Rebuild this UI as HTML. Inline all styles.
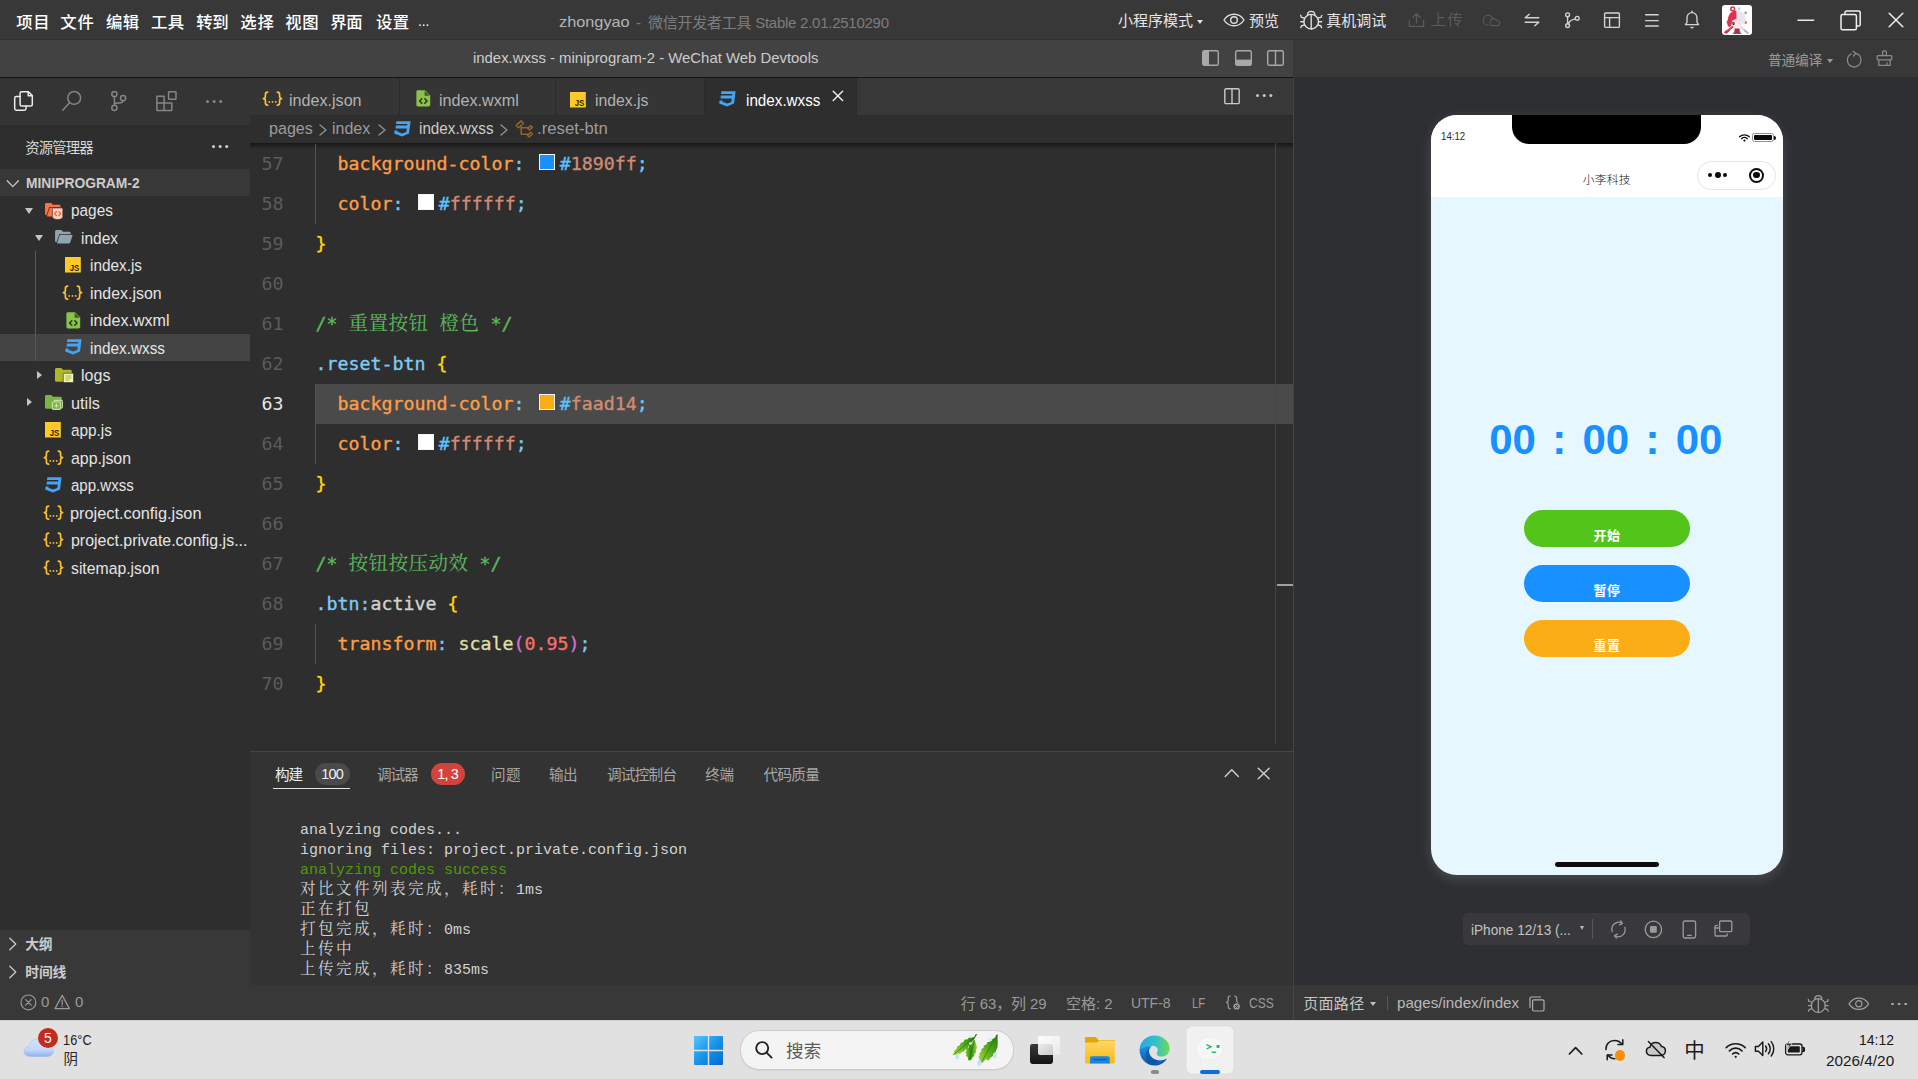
<!DOCTYPE html>
<html lang="zh-CN">
<head>
<meta charset="utf-8">
<title>index.wxss - miniprogram-2 - WeChat Web Devtools</title>
<style>
*{box-sizing:border-box;margin:0;padding:0}
html,body{width:1918px;height:1079px;overflow:hidden;background:#2e2f32}
body{position:relative;font-family:"Liberation Sans","Noto Sans CJK SC",sans-serif;font-size:13px;color:#ccc;-webkit-font-smoothing:antialiased}
.abs{position:absolute}
.t{position:absolute;white-space:nowrap;line-height:20px}
svg{position:absolute;overflow:visible}
/* regions */
#topbar{left:0;top:0;width:1918px;height:40px;background:#383838;border-bottom:1px solid #303030}
#titlerow{left:0;top:40px;width:1293px;height:37px;background:#424242}
#titleborder{left:0;top:77px;width:1293px;height:1px;background:#141414}
#simbar{left:1293px;top:40px;width:625px;height:37px;background:#383838}
#activity{left:0;top:78px;width:250px;height:47px;background:#343434}
#sidebar{left:0;top:125px;width:250px;height:860px;background:#2e2e2e}
#tabs{left:250px;top:78px;width:1043px;height:37px;background:#383838}
#crumbs{left:250px;top:115px;width:1043px;height:28px;background:#2e2e2e}
#editor{left:250px;top:143px;width:1043px;height:608px;background:#2e2e2e}
#panel{left:250px;top:751px;width:1043px;height:234px;background:#333333;border-top:1px solid #454545}
#status{left:0;top:985px;width:1918px;height:35px;background:#383838}
#split{left:1293px;top:78px;width:1px;height:907px;background:#444444}
#sim{left:1294px;top:77px;width:624px;height:908px;background:#2e2f32}
#taskbar{left:0;top:1020px;width:1918px;height:59px;background:#e1e1e1}
</style>
</head>
<body>
<div class="abs" id="topbar"></div>
<div class="abs" id="titlerow"></div>
<div class="abs" id="titleborder"></div>
<div class="abs" id="simbar"></div>
<div class="abs" id="sim"></div>
<div class="abs" id="split"></div>
<div class="abs" id="activity"></div>
<div class="abs" id="sidebar"></div>
<div class="abs" id="tabs"></div>
<div class="abs" id="crumbs"></div>
<div class="abs" id="editor"></div>
<div class="abs" id="panel"></div>
<div class="abs" id="status"></div>
<div class="abs" id="taskbar"></div>
<div class="abs" style="left:1197px;top:20px;border-left:3.2px solid transparent;border-right:3.2px solid transparent;border-top:4.5px solid #e0e0e0"></div>
<div class="abs" style="left:1827.3px;top:59px;border-left:3px solid transparent;border-right:3px solid transparent;border-top:4.6px solid #9a9a9a"></div>
<svg style="left:1223px;top:13px" width="22" height="14" viewBox="0 0 22 14" fill="none" stroke="#e0e0e0" stroke-width="1.4" stroke-linecap="round" stroke-linejoin="round"><path d="M1 7 C4 2.2 8 1.2 11 1.2 C14 1.2 18 2.2 21 7 C18 11.8 14 12.8 11 12.8 C8 12.8 4 11.8 1 7 Z"/><circle cx="11" cy="7" r="3.3"/></svg>
<svg style="left:1298px;top:8px" width="26" height="24" viewBox="0 0 26 24" fill="none" stroke="#e0e0e0" stroke-width="1.35" stroke-linecap="round" stroke-linejoin="round"><g transform="translate(13.2 13.65) scale(1)"><circle cx="0" cy="0" r="7.3"/><path d="M-3.7 -7.000 C-3.300 -11.400 3.300 -11.400 3.700 -7.000"/><path d="M0 -7.000 V7.200"/><path d="M-7.100 -3.700 L-9.800 -4.200 L-10.500 -6.500 M-7.400 .100 H-10.400 M-7.100 3.500 L-9.600 4.100 L-10.400 6.000"/><path d="M7.100 -3.700 L9.800 -4.200 L10.500 -6.300 M7.400 .100 H10.400 M7.100 3.500 L9.600 4.100 L10.400 6.000"/></g></svg>
<svg style="left:1408px;top:12px" width="17" height="16" viewBox="0 0 17 16" fill="none" stroke="#5a5a5a" stroke-width="1.3" stroke-linecap="round" stroke-linejoin="round"><path d="M1.4 8.6 V14.4 H15.6 V8.6"/><path d="M8.5 11 V1.8 M4.9 5.2 L8.5 1.6 L12.1 5.2"/></svg>
<svg style="left:1482px;top:14px" width="19" height="13" viewBox="0 0 19 13" fill="none" stroke="#575757" stroke-width="1.2" stroke-linecap="round" stroke-linejoin="round"><path d="M6.4 11.2 C3.4 11.2 1.2 9.2 1.2 6.4 C1.2 3.6 3.4 1.4 6.2 1.4 C8.6 1.4 10.4 2.8 11 4.8"/><path d="M8.2 8 C8.2 6 9.8 4.6 11.6 4.6 C13 4.6 14.2 5.4 14.7 6.6 C16.4 6.6 17.8 7.6 17.8 9.1 C17.8 10.5 16.6 11.6 15 11.6 H10.4 C9.2 11.6 8.2 10.2 8.2 8 Z"/></svg>
<svg style="left:1524px;top:13px" width="16" height="14" viewBox="0 0 16 14" fill="none" stroke="#d4d4d4" stroke-width="1.4" stroke-linecap="round" stroke-linejoin="round"><path d="M1.2 4.8 H14.8 M1.2 4.8 L5.2 1.2"/><path d="M1.2 9.2 H14.8 M14.8 9.2 L10.8 12.8"/></svg>
<svg style="left:1564px;top:12px" width="17" height="17" viewBox="0 0 17 17" fill="none" stroke="#d4d4d4" stroke-width="1.35" stroke-linecap="round" stroke-linejoin="round"><circle cx="3.6" cy="2.8" r="1.9"/><circle cx="3.6" cy="13.6" r="1.9"/><circle cx="13.2" cy="6.2" r="1.9"/><path d="M3.6 4.8 V11.6 M4.4 12 C5 9 8 7.6 11.4 6.8"/></svg>
<svg style="left:1603px;top:12px" width="18" height="17" viewBox="0 0 18 17" fill="none" stroke="#d4d4d4" stroke-width="1.35" stroke-linecap="round" stroke-linejoin="round"><rect x="1.6" y="1" width="14.8" height="14.4" rx="1"/><path d="M1.6 5.6 H16.4 M6.6 5.6 V15.4"/></svg>
<svg style="left:1644px;top:13px" width="16" height="15" viewBox="0 0 16 15" fill="none" stroke="#d4d4d4" stroke-width="1.4" stroke-linecap="round" stroke-linejoin="round"><path d="M1.6 1.8 H14.2 M1.6 7.6 H14.2 M1.6 13 H14.2"/></svg>
<svg style="left:1684px;top:10px" width="16" height="20" viewBox="0 0 16 20" fill="none" stroke="#d4d4d4" stroke-width="1.35" stroke-linecap="round" stroke-linejoin="round"><path d="M1.4 14.6 H14.6 L13 12.4 V8 C13 4.8 11 2.6 8 2.6 C5 2.6 3 4.8 3 8 V12.4 Z"/><path d="M8 2.4 V1.2"/><path d="M7 17.2 C7.4 18 8.6 18 9 17.2"/></svg>
<svg style="left:1797px;top:19px" width="18" height="3" viewBox="0 0 18 3" fill="none" stroke="#e8e8e8" stroke-width="1.5" stroke-linecap="round" stroke-linejoin="round"><path d="M1 1.2 H16.6"/></svg>
<svg style="left:1840px;top:10px" width="22" height="21" viewBox="0 0 22 21" fill="none" stroke="#f0f0f0" stroke-width="1.5" stroke-linecap="round" stroke-linejoin="round"><rect x="1" y="4.6" width="15.4" height="15.2" rx="1.6"/><path d="M5 4.4 V2.6 C5 1.6 5.6 1 6.6 1 H18.6 C19.6 1 20.2 1.6 20.2 2.6 V14.4 C20.2 15.4 19.6 16 18.6 16 H16.6"/></svg>
<svg style="left:1888px;top:12px" width="16" height="16" viewBox="0 0 16 16" fill="none" stroke="#f0f0f0" stroke-width="1.5" stroke-linecap="round" stroke-linejoin="round"><path d="M1.2 1.2 L14.8 14.8 M14.8 1.2 L1.2 14.8"/></svg>
<svg style="left:1722px;top:4.8px" width="30" height="30.2" viewBox="0 0 30 30"><rect width="30" height="30" rx="3" fill="#ffffff"/>
<path d="M2.4 27.2 L10.6 20.4 L12 22 L4 28.4 Z" fill="#d83a4e"/><path d="M2 27.6 C3 25 6.400 24 8 25.400 L4.600 28.600 Z" fill="#e0324b"/>
<path d="M26.800 27.400 L18.200 20.200 L17 21.800 L25.600 28.600 Z" fill="#dcd6e6"/><path d="M22.600 24.200 L26.900 27.600 L25.400 28.800 L21.600 25.600 Z" fill="#b7b0c4"/>
<path d="M4.200 16.400 L7 15.200 L8 17.800 L5.200 19 Z" fill="#e8731a"/><path d="M25.200 16.600 L22.600 15.400 L21.400 18 L24.200 19.200 Z" fill="#e8731a"/>
<path d="M14.600 5.800 C11 5.200 7.600 7.800 6.400 11.600 C5.400 14.800 5 18 5.600 20.400 C6 21.800 7.600 22.200 8.800 21.200 L10.400 17.400 L14.800 15.600 Z" fill="#de3350"/>
<path d="M14.600 5.800 C19 5 22.800 8 23.400 12.400 C23.800 15.600 23.200 18.400 21.800 19.800 L19.400 17 L14.700 15.600 Z" fill="#e9e4f0"/>
<circle cx="10.700" cy="3.800" r="1.900" fill="none" stroke="#de3350" stroke-width="1.500"/>
<path d="M15.600 2.400 H18.400 V5.400 H15.600 Z" fill="#e4e1ea"/><path d="M16.200 3 H17.800 M16.200 4.400 H17.800" stroke="#9e9aae" stroke-width=".5"/>
<circle cx="23.700" cy="7.800" r="1.700" fill="#cfcbdc"/><circle cx="23.600" cy="7.600" r=".8" fill="#77739a"/>
<path d="M9.800 17.600 C10.200 15.400 12.400 14.400 14.800 14.400 C17.600 14.400 19.800 15.600 20 17.800 C20.200 20.600 18 22.400 14.800 22.400 C11.800 22.400 9.400 20.600 9.800 17.600 Z" fill="#f7e8e2"/>
<path d="M10.400 16.800 C12 15 16 14.600 19.600 16.400 L19.400 15 C17 13.600 12.400 13.800 10.400 15.400 Z" fill="#efd9d2"/>
<rect x="10.300" y="16.900" width="2.300" height="3" rx=".9" fill="#3d2a66"/><rect x="10.900" y="17.500" width="1" height="1.300" fill="#8a4fd0"/>
<path d="M16.200 18.600 C16.800 18 17.800 18 18.400 18.600" stroke="#caa" stroke-width=".5" fill="none"/>
<path d="M11.400 22.600 H18.600 L19.400 28.400 H10.800 Z" fill="#f1edf2"/><path d="M12.800 23.400 H17.400 L18 27.800 H12.200 Z" fill="#b92a3f"/><path d="M11 27.600 H19.200 V28.800 H11 Z" fill="#6b4a4a"/>
</svg>
<svg style="left:1202px;top:50px" width="17" height="16" viewBox="0 0 17 16" fill="none" stroke="#a8a8a8" stroke-width="1.4" stroke-linecap="round" stroke-linejoin="round"><rect x=".7" y=".7" width="15.6" height="14.6" rx="1.6"/><path d="M1 1 H7 V15 H1 Z" fill="#a8a8a8" stroke="none"/></svg>
<svg style="left:1234.5px;top:50px" width="17" height="16" viewBox="0 0 17 16" fill="none" stroke="#a8a8a8" stroke-width="1.4" stroke-linecap="round" stroke-linejoin="round"><rect x=".7" y=".7" width="15.6" height="14.6" rx="1.6"/><path d="M1 9.6 H16 V15 H1 Z" fill="#a8a8a8" stroke="none"/></svg>
<svg style="left:1267px;top:50px" width="17" height="16" viewBox="0 0 17 16" fill="none" stroke="#a8a8a8" stroke-width="1.4" stroke-linecap="round" stroke-linejoin="round"><rect x=".7" y=".7" width="15.6" height="14.6" rx="1.6"/><path d="M8.5 .7 V15.3"/></svg>
<svg style="left:1845px;top:50px" width="18" height="19" viewBox="0 0 18 19" fill="none" stroke="#8a8a8a" stroke-width="1.25" stroke-linecap="round" stroke-linejoin="round"><path d="M10.4 3.4 C13.8 4 16 6.8 16 10.2 C16 14 13 17 9.2 17 C5.4 17 2.4 14 2.4 10.2 C2.4 7.4 4 5 6.4 4"/><path d="M8.2 1.2 L10.8 3.4 L8.6 6"/></svg>
<svg style="left:1875.5px;top:50px" width="17" height="17" viewBox="0 0 17 17" fill="none" stroke="#8a8a8a" stroke-width="1.25" stroke-linecap="round" stroke-linejoin="round"><path d="M6.6 5.6 V2 C6.6 1.3 7.1 .9 7.8 .9 H9.2 C9.9 .9 10.4 1.3 10.4 2 V5.6"/><rect x="1.2" y="5.6" width="14.6" height="4.2" rx=".8"/><path d="M2.8 9.8 V15.4 H14.2 V9.8 M11 15.4 V12.8"/></svg>
<svg style="left:13px;top:90px" width="22" height="22" viewBox="0 0 22 22" fill="none" stroke="#ececec" stroke-width="1.5" stroke-linecap="round" stroke-linejoin="round" ><path d="M7 6.6 H3.2 C2.2 6.6 1.7 7.2 1.7 8.2 V18.6 C1.7 19.6 2.2 20.2 3.2 20.2 H11.4 C12.4 20.2 13 19.6 13 18.6 V16"/><path d="M8.6 1.7 H15.4 L19.3 5.6 V14.4 C19.3 15.4 18.8 16 17.8 16 H8.6 C7.6 16 7.1 15.4 7.1 14.4 V3.2 C7.1 2.2 7.6 1.7 8.6 1.7 Z"/><path d="M15.2 2 V5.8 H19"/></svg>
<svg style="left:61px;top:90px" width="22" height="22" viewBox="0 0 22 22" fill="none" stroke="#858585" stroke-width="1.5" stroke-linecap="round" stroke-linejoin="round" ><circle cx="13.2" cy="7.9" r="6.4"/><path d="M8.7 12.6 L1.8 20.2"/></svg>
<svg style="left:109px;top:90px" width="20" height="22" viewBox="0 0 20 22" fill="none" stroke="#858585" stroke-width="1.5" stroke-linecap="round" stroke-linejoin="round" ><circle cx="5.4" cy="4" r="2.6"/><circle cx="5.4" cy="17.8" r="2.6"/><circle cx="14.1" cy="8.1" r="2.6"/><path d="M5.4 6.6 V15.2"/><path d="M14.1 10.7 C14.1 13 11 13 5.6 13.2"/></svg>
<svg style="left:155px;top:90px" width="23" height="22" viewBox="0 0 23 22" fill="none" stroke="#858585" stroke-width="1.5" stroke-linecap="round" stroke-linejoin="round" ><path d="M1.9 6.3 H9.1 V13.1 H16.8 V20.4 H1.9 Z"/><path d="M1.9 13.1 H9.1 V20.4"/><rect x="13.6" y="1.8" width="7.4" height="7.4" rx=".6"/></svg>
<div class="abs" style="left:205.5px;top:100px;width:3px;height:3px;border-radius:50%;background:#858585;box-shadow:6.6px 0 0 #858585,13.2px 0 0 #858585"></div>
<div class="abs" style="left:212px;top:145.2px;width:3px;height:3px;border-radius:50%;background:#d0d0d0;box-shadow:6.6px 0 0 #d0d0d0,13.2px 0 0 #d0d0d0"></div>
<div class="abs" style="left:0;top:169px;width:250px;height:27px;background:#383838"></div>
<svg style="left:6px;top:178.8px" width="14" height="10" viewBox="0 0 14 10" fill="none" stroke="#c8c8c8" stroke-width="1.3" stroke-linecap="round" stroke-linejoin="round" ><path d="M1.2 1.8 L6.8 7.6 L12.4 1.8"/></svg>
<div class="abs" style="left:0;top:334px;width:250px;height:27px;background:#444444"></div>
<div class="abs" style="left:35px;top:251px;width:1px;height:110px;background:#585858"></div>
<div class="abs" style="left:24.8px;top:207.9px;border-left:4.2px solid transparent;border-right:4.2px solid transparent;border-top:6.4px solid #c4c4c4"></div>
<svg style="left:44.8px;top:203.1px" width="17.4" height="13.6" viewBox="0 0 18 14" fill="#ff7043"><path d="M1.6 0 H6.4 L8.2 1.8 H14.6 C15.5 1.8 16 2.3 16 3.2 V4.2 H4.4 L1.6 12.4 H.8 C.3 12.4 0 12 0 11.4 V1.6 C0 .6 .6 0 1.6 0 Z"/><path d="M4.9 4.9 H17.4 C17.9 4.9 18.1 5.3 17.9 5.8 L15.6 13 C15.4 13.6 15 13.9 14.4 13.9 H2.6 C2.1 13.9 1.9 13.6 2.1 13.1 Z"/></svg>
<svg style="left:52.2px;top:207.9px" width="11" height="12" viewBox="0 0 11 12"><path d="M1.4 0 H9.6 C10.4 0 10.8 .4 10.8 1.2 V8.6 C10.8 10.4 8.6 11.6 5.6 11.6 C2.6 11.6 .4 10.4 .4 8.6 V1.2 C.4 .4 .6 0 1.4 0 Z" fill="#ffccbc" stroke="#2e2e2e" stroke-width=".6"/><path d="M4.4 3.6 L2.6 5.6 L4.4 7.6 M6.8 3.6 L8.6 5.6 L6.8 7.6" fill="none" stroke="#f4511e" stroke-width="1.1" stroke-linecap="round" stroke-linejoin="round"/></svg>
<div class="abs" style="left:34.8px;top:235.4px;border-left:4.2px solid transparent;border-right:4.2px solid transparent;border-top:6.4px solid #c4c4c4"></div>
<svg style="left:54.8px;top:230.2px" width="17.6" height="13.6" viewBox="0 0 18 14" fill="#90a4ae"><path d="M1.6 0 H6.4 L8.2 1.8 H14.6 C15.5 1.8 16 2.3 16 3.2 V4.2 H4.4 L1.6 12.4 H.8 C.3 12.4 0 12 0 11.4 V1.6 C0 .6 .6 0 1.6 0 Z"/><path d="M4.9 4.9 H17.4 C17.9 4.9 18.1 5.3 17.9 5.8 L15.6 13 C15.4 13.6 15 13.9 14.4 13.9 H2.6 C2.1 13.9 1.9 13.6 2.1 13.1 Z"/></svg>
<svg style="left:65.2px;top:257.3px" width="16" height="16" viewBox="0 0 16 16"><rect width="15.8" height="15.5" fill="#ffca28"/><text x="4.7" y="13.6" font-family="Liberation Sans,sans-serif" font-weight="bold" font-size="8.6" fill="#2b2400" textLength="9.6" lengthAdjust="spacingAndGlyphs">JS</text></svg>
<svg style="left:62.4px;top:284.6px" width="21" height="16" viewBox="0 0 21 16" fill="none" stroke="#fbc02d" stroke-width="1.7" stroke-linecap="round" stroke-linejoin="round" ><path d="M5.6 1.2 C3.6 1.2 3.4 2.2 3.4 3.6 V5.6 C3.4 6.8 2.8 7.4 1.4 7.6 C2.8 7.8 3.4 8.4 3.4 9.6 V11.8 C3.4 13.2 3.6 14.2 5.6 14.2"/><path d="M15.4 1.2 C17.4 1.2 17.6 2.2 17.6 3.6 V5.6 C17.6 6.8 18.2 7.4 19.6 7.6 C18.2 7.8 17.6 8.4 17.6 9.6 V11.8 C17.6 13.2 17.4 14.2 15.4 14.2"/><path d="M7.2 10.9 h.1 M10.45 10.9 h.1 M13.7 10.9 h.1" stroke-width="1.7"/></svg>
<svg style="left:65.8px;top:311.9px" width="15" height="17" viewBox="0 0 15 17"><path d="M2 .2 H9 L14.2 5.4 V14.8 C14.2 15.8 13.6 16.4 12.6 16.4 H2 C1 16.4 .4 15.8 .4 14.8 V1.8 C.4 .8 1 .2 2 .2 Z" fill="#8bc34a"/><path d="M8.6 .8 V5.8 H13.6 Z" fill="#2e2e2e" opacity=".75"/><path d="M5.8 8.8 L3.6 11 L5.8 13.2 M8.8 8.8 L11 11 L8.8 13.2" fill="none" stroke="#24361a" stroke-width="1.5" stroke-linecap="round" stroke-linejoin="round"/></svg>
<svg style="left:64.6px;top:339.2px" width="17" height="16" viewBox="0 0 17 16" fill="#42a5f5"><path d="M2.4 .2 H16.6 L15 12.6 L8 15.6 L.2 12.6 L.6 9.6 H3.6 L3.5 10.8 L8.1 12.5 L12.3 10.9 L12.8 7.4 H1.5 L1.9 4.6 H13.1 L13.3 3 H2 Z"/></svg>
<div class="abs" style="left:37.2px;top:370.7px;border-top:4.4px solid transparent;border-bottom:4.4px solid transparent;border-left:5.8px solid #c4c4c4"></div>
<svg style="left:54.8px;top:367.9px" width="17" height="14" viewBox="0 0 17 14" fill="#afb42b"><path d="M1.6 0 H6.2 L8 1.8 H15.2 C16.2 1.8 16.8 2.4 16.8 3.4 V12.2 C16.8 13.2 16.2 13.8 15.2 13.8 H1.6 C.6 13.8 0 13.2 0 12.2 V1.6 C0 .6 .6 0 1.6 0 Z"/></svg>
<svg style="left:62.6px;top:373.1px" width="11" height="10" viewBox="0 0 11 10"><rect x=".3" y=".3" width="10.2" height="9.2" rx="1" fill="#f0f4c3" stroke="#2e2e2e" stroke-width=".6"/><path d="M2.4 3 H8.4 M2.4 5 H8.4 M2.4 7 H6.4" stroke="#afb42b" stroke-width="1" fill="none"/></svg>
<div class="abs" style="left:27.2px;top:398.2px;border-top:4.4px solid transparent;border-bottom:4.4px solid transparent;border-left:5.8px solid #c4c4c4"></div>
<svg style="left:44.8px;top:395.0px" width="17" height="14" viewBox="0 0 17 14" fill="#7cb342"><path d="M1.6 0 H6.2 L8 1.8 H15.2 C16.2 1.8 16.8 2.4 16.8 3.4 V12.2 C16.8 13.2 16.2 13.8 15.2 13.8 H1.6 C.6 13.8 0 13.2 0 12.2 V1.6 C0 .6 .6 0 1.6 0 Z"/></svg>
<svg style="left:52.4px;top:399.6px" width="11" height="10" viewBox="0 0 11 10"><rect x="2.2" y=".4" width="8.2" height="7.6" rx="1" fill="none" stroke="#c5e1a5" stroke-width="1.1"/><rect x=".4" y="2" width="8" height="7.4" rx="1" fill="#7cb342" stroke="#c5e1a5" stroke-width="1.1"/><path d="M4.4 3.8 V7.6 M2.5 5.7 H6.3" stroke="#dcedc8" stroke-width="1.1"/></svg>
<svg style="left:45.3px;top:422.3px" width="16" height="16" viewBox="0 0 16 16"><rect width="15.8" height="15.5" fill="#ffca28"/><text x="4.7" y="13.6" font-family="Liberation Sans,sans-serif" font-weight="bold" font-size="8.6" fill="#2b2400" textLength="9.6" lengthAdjust="spacingAndGlyphs">JS</text></svg>
<svg style="left:42.6px;top:449.6px" width="21" height="16" viewBox="0 0 21 16" fill="none" stroke="#fbc02d" stroke-width="1.7" stroke-linecap="round" stroke-linejoin="round" ><path d="M5.6 1.2 C3.6 1.2 3.4 2.2 3.4 3.6 V5.6 C3.4 6.8 2.8 7.4 1.4 7.6 C2.8 7.8 3.4 8.4 3.4 9.6 V11.8 C3.4 13.2 3.6 14.2 5.6 14.2"/><path d="M15.4 1.2 C17.4 1.2 17.6 2.2 17.6 3.6 V5.6 C17.6 6.8 18.2 7.4 19.6 7.6 C18.2 7.8 17.6 8.4 17.6 9.6 V11.8 C17.6 13.2 17.4 14.2 15.4 14.2"/><path d="M7.2 10.9 h.1 M10.45 10.9 h.1 M13.7 10.9 h.1" stroke-width="1.7"/></svg>
<svg style="left:44.6px;top:476.7px" width="17" height="16" viewBox="0 0 17 16" fill="#42a5f5"><path d="M2.4 .2 H16.6 L15 12.6 L8 15.6 L.2 12.6 L.6 9.6 H3.6 L3.5 10.8 L8.1 12.5 L12.3 10.9 L12.8 7.4 H1.5 L1.9 4.6 H13.1 L13.3 3 H2 Z"/></svg>
<svg style="left:42.6px;top:504.6px" width="21" height="16" viewBox="0 0 21 16" fill="none" stroke="#fbc02d" stroke-width="1.7" stroke-linecap="round" stroke-linejoin="round" ><path d="M5.6 1.2 C3.6 1.2 3.4 2.2 3.4 3.6 V5.6 C3.4 6.8 2.8 7.4 1.4 7.6 C2.8 7.8 3.4 8.4 3.4 9.6 V11.8 C3.4 13.2 3.6 14.2 5.6 14.2"/><path d="M15.4 1.2 C17.4 1.2 17.6 2.2 17.6 3.6 V5.6 C17.6 6.8 18.2 7.4 19.6 7.6 C18.2 7.8 17.6 8.4 17.6 9.6 V11.8 C17.6 13.2 17.4 14.2 15.4 14.2"/><path d="M7.2 10.9 h.1 M10.45 10.9 h.1 M13.7 10.9 h.1" stroke-width="1.7"/></svg>
<svg style="left:42.6px;top:532.1px" width="21" height="16" viewBox="0 0 21 16" fill="none" stroke="#fbc02d" stroke-width="1.7" stroke-linecap="round" stroke-linejoin="round" ><path d="M5.6 1.2 C3.6 1.2 3.4 2.2 3.4 3.6 V5.6 C3.4 6.8 2.8 7.4 1.4 7.6 C2.8 7.8 3.4 8.4 3.4 9.6 V11.8 C3.4 13.2 3.6 14.2 5.6 14.2"/><path d="M15.4 1.2 C17.4 1.2 17.6 2.2 17.6 3.6 V5.6 C17.6 6.8 18.2 7.4 19.6 7.6 C18.2 7.8 17.6 8.4 17.6 9.6 V11.8 C17.6 13.2 17.4 14.2 15.4 14.2"/><path d="M7.2 10.9 h.1 M10.45 10.9 h.1 M13.7 10.9 h.1" stroke-width="1.7"/></svg>
<svg style="left:42.6px;top:559.6px" width="21" height="16" viewBox="0 0 21 16" fill="none" stroke="#fbc02d" stroke-width="1.7" stroke-linecap="round" stroke-linejoin="round" ><path d="M5.6 1.2 C3.6 1.2 3.4 2.2 3.4 3.6 V5.6 C3.4 6.8 2.8 7.4 1.4 7.6 C2.8 7.8 3.4 8.4 3.4 9.6 V11.8 C3.4 13.2 3.6 14.2 5.6 14.2"/><path d="M15.4 1.2 C17.4 1.2 17.6 2.2 17.6 3.6 V5.6 C17.6 6.8 18.2 7.4 19.6 7.6 C18.2 7.8 17.6 8.4 17.6 9.6 V11.8 C17.6 13.2 17.4 14.2 15.4 14.2"/><path d="M7.2 10.9 h.1 M10.45 10.9 h.1 M13.7 10.9 h.1" stroke-width="1.7"/></svg>
<div class="abs" style="left:0;top:930px;width:250px;height:55px;background:#383838"></div>
<svg style="left:8px;top:937px" width="10" height="14" viewBox="0 0 10 14" fill="none" stroke="#c8c8c8" stroke-width="1.3" stroke-linecap="round" stroke-linejoin="round" ><path d="M1.8 1.2 L7.8 7 L1.8 12.8"/></svg>
<svg style="left:8px;top:964.5px" width="10" height="14" viewBox="0 0 10 14" fill="none" stroke="#c8c8c8" stroke-width="1.3" stroke-linecap="round" stroke-linejoin="round" ><path d="M1.8 1.2 L7.8 7 L1.8 12.8"/></svg>
<div class="abs" style="left:250px;top:78px;width:149px;height:37px;background:#353535"></div>
<div class="abs" style="left:400px;top:78px;width:155px;height:37px;background:#353535"></div>
<div class="abs" style="left:556px;top:78px;width:148px;height:37px;background:#353535"></div>
<div class="abs" style="left:705px;top:78px;width:151px;height:37px;background:#2e2e2e"></div>
<div class="abs" style="left:399px;top:78px;width:1px;height:37px;background:#2b2b2b"></div>
<div class="abs" style="left:555px;top:78px;width:1px;height:37px;background:#2b2b2b"></div>
<div class="abs" style="left:704px;top:78px;width:1px;height:37px;background:#2b2b2b"></div>
<div class="abs" style="left:856px;top:78px;width:1px;height:37px;background:#2b2b2b"></div>
<svg style="left:262.4px;top:91.4px" width="21" height="16" viewBox="0 0 21 16" fill="none" stroke="#fbc02d" stroke-width="1.7" stroke-linecap="round" stroke-linejoin="round" ><path d="M5.6 1.2 C3.6 1.2 3.4 2.2 3.4 3.6 V5.6 C3.4 6.8 2.8 7.4 1.4 7.6 C2.8 7.8 3.4 8.4 3.4 9.6 V11.8 C3.4 13.2 3.6 14.2 5.6 14.2"/><path d="M15.4 1.2 C17.4 1.2 17.6 2.2 17.6 3.6 V5.6 C17.6 6.8 18.2 7.4 19.6 7.6 C18.2 7.8 17.6 8.4 17.6 9.6 V11.8 C17.6 13.2 17.4 14.2 15.4 14.2"/><path d="M7.2 10.9 h.1 M10.45 10.9 h.1 M13.7 10.9 h.1" stroke-width="1.7"/></svg>
<svg style="left:415.6px;top:90.4px" width="15" height="17" viewBox="0 0 15 17"><path d="M2 .2 H9 L14.2 5.4 V14.8 C14.2 15.8 13.6 16.4 12.6 16.4 H2 C1 16.4 .4 15.8 .4 14.8 V1.8 C.4 .8 1 .2 2 .2 Z" fill="#8bc34a"/><path d="M8.6 .8 V5.8 H13.6 Z" fill="#2e2e2e" opacity=".75"/><path d="M5.8 8.8 L3.6 11 L5.8 13.2 M8.8 8.8 L11 11 L8.8 13.2" fill="none" stroke="#24361a" stroke-width="1.5" stroke-linecap="round" stroke-linejoin="round"/></svg>
<svg style="left:570px;top:91.6px" width="16" height="16" viewBox="0 0 16 16"><rect width="15.8" height="15.5" fill="#ffca28"/><text x="4.7" y="13.6" font-family="Liberation Sans,sans-serif" font-weight="bold" font-size="8.6" fill="#2b2400" textLength="9.6" lengthAdjust="spacingAndGlyphs">JS</text></svg>
<svg style="left:719.4px;top:91.2px" width="17" height="16" viewBox="0 0 17 16" fill="#42a5f5"><path d="M2.4 .2 H16.6 L15 12.6 L8 15.6 L.2 12.6 L.6 9.6 H3.6 L3.5 10.8 L8.1 12.5 L12.3 10.9 L12.8 7.4 H1.5 L1.9 4.6 H13.1 L13.3 3 H2 Z"/></svg>
<svg style="left:832px;top:90.4px" width="12" height="12" viewBox="0 0 12 12" fill="none" stroke="#f0f0f0" stroke-width="1.4" stroke-linecap="round" stroke-linejoin="round" ><path d="M1.2 1.2 L10.6 10.6 M10.6 1.2 L1.2 10.6"/></svg>
<svg style="left:1223.5px;top:88px" width="16" height="17" viewBox="0 0 16 17" fill="none" stroke="#c8c8c8" stroke-width="1.4" stroke-linecap="round" stroke-linejoin="round" ><rect x=".8" y=".8" width="14.4" height="14.8" rx="1.2"/><path d="M8 .8 V15.6"/></svg>
<div class="abs" style="left:1255.6px;top:94.3px;width:3px;height:3px;border-radius:50%;background:#c8c8c8;box-shadow:6.7px 0 0 #c8c8c8,13.4px 0 0 #c8c8c8"></div>
<svg style="left:319.3px;top:123.6px" width="9" height="12" viewBox="0 0 9 12" fill="none" stroke="#929292" stroke-width="1.35" stroke-linecap="round" stroke-linejoin="round" ><path d="M1 1 L7 6 L1 11"/></svg>
<svg style="left:378.3px;top:123.6px" width="9" height="12" viewBox="0 0 9 12" fill="none" stroke="#929292" stroke-width="1.35" stroke-linecap="round" stroke-linejoin="round" ><path d="M1 1 L7 6 L1 11"/></svg>
<svg style="left:500.3px;top:123.6px" width="9" height="12" viewBox="0 0 9 12" fill="none" stroke="#929292" stroke-width="1.35" stroke-linecap="round" stroke-linejoin="round" ><path d="M1 1 L7 6 L1 11"/></svg>
<svg style="left:393.6px;top:121px" width="17" height="16" viewBox="0 0 17 16" fill="#42a5f5"><path d="M2.4 .2 H16.6 L15 12.6 L8 15.6 L.2 12.6 L.6 9.6 H3.6 L3.5 10.8 L8.1 12.5 L12.3 10.9 L12.8 7.4 H1.5 L1.9 4.6 H13.1 L13.3 3 H2 Z"/></svg>
<svg style="left:505px;top:114.6px" width="40" height="28" viewBox="0 0 40 28" fill="none" stroke="#916528" stroke-width="1.5" stroke-linejoin="round" stroke-linecap="round"><path d="M16.1 5.900 L18.500 8.300 L13.500 12.700 L11.300 10.400 Z"/><path d="M16.2 11.600 V19.200 H22.600 M16.2 12.700 H23"/><path d="M25.700 10.800 L27.400 12.400 L24.400 15 L22.800 13.400 Z"/><path d="M25.700 17.400 L27.400 19 L24.200 22 L22.600 20.400 Z"/></svg>
<div class="abs" style="left:250px;top:143px;width:1043px;height:6px;background:linear-gradient(#171717,rgba(28,28,28,0))"></div>
<div class="abs" style="left:315px;top:384px;width:978px;height:40px;background:#4a4a4a"></div>
<div class="abs" style="left:315px;top:144px;width:1px;height:80px;background:#545454"></div>
<div class="abs" style="left:315px;top:384px;width:1px;height:80px;background:#545454"></div>
<div class="abs" style="left:315px;top:624px;width:1px;height:40px;background:#545454"></div>
<div class="abs" style="left:1275px;top:143px;width:1px;height:601px;background:#444444"></div>
<div class="abs" style="left:1277px;top:584px;width:16px;height:2px;background:#a0a0a0"></div>
<div class="abs" style="left:315px;top:763px;width:35px;height:22px;border-radius:11px;background:#4a4a4a"></div>
<div class="abs" style="left:273px;top:787.5px;width:77px;height:1.2px;background:#e4e4e4"></div>
<div class="abs" style="left:431px;top:763px;width:34px;height:22px;border-radius:11px;background:#d2433d"></div>
<svg style="left:1224px;top:767.6px" width="16" height="10" viewBox="0 0 16 10" fill="none" stroke="#d0d0d0" stroke-width="1.4" stroke-linecap="round" stroke-linejoin="round"><path d="M1.2 8.6 L7.8 1.8 L14.4 8.6"/></svg>
<svg style="left:1257.4px;top:767px" width="14" height="13" viewBox="0 0 14 13" fill="none" stroke="#d0d0d0" stroke-width="1.4" stroke-linecap="round" stroke-linejoin="round"><path d="M1.2 1.2 L12.2 11.8 M12.2 1.2 L1.2 11.8"/></svg>
<svg style="left:19.6px;top:993.8px" width="17" height="17" viewBox="0 0 17 17" fill="none" stroke="#9a9a9a" stroke-width="1.2" stroke-linecap="round" stroke-linejoin="round"><circle cx="8.4" cy="8.4" r="7.4"/><path d="M5.6 5.6 L11.2 11.2 M11.2 5.6 L5.6 11.2"/></svg>
<svg style="left:53.6px;top:993.6px" width="17" height="16" viewBox="0 0 17 16" fill="none" stroke="#9a9a9a" stroke-width="1.2" stroke-linecap="round" stroke-linejoin="round"><path d="M8.2 1.4 L15.4 14.6 H1 Z"/><path d="M8.2 6 V10.4 M8.2 12.2 V12.6"/></svg>
<svg style="left:1225px;top:995.4px" width="17" height="16" viewBox="0 0 17 16" fill="none" stroke="#9a9a9a" stroke-width="1.2" stroke-linecap="round" stroke-linejoin="round"><path d="M5.2 1 C3.4 1 3.2 1.8 3.2 3.2 V5.6 C3.2 6.6 2.6 7.2 1.4 7.4 C2.6 7.6 3.2 8.2 3.2 9.2 V11.6 C3.2 13 3.4 13.8 5.2 13.8"/><path d="M9.6 1 C11.4 1 11.6 1.8 11.6 3.2 V5.6 C11.6 6.4 12 7 12.8 7.3"/><circle cx="11.6" cy="11.4" r="3.2" fill="#9a9a9a" stroke="none"/><path d="M10.4 10.2 L12.8 12.6 M12.8 10.2 L10.4 12.6" stroke="#383838" stroke-width="1"/></svg>
<div class="abs" style="left:1293px;top:985px;width:1px;height:35px;background:#464646"></div>
<div class="abs" style="left:1370.4px;top:1002px;border-left:3.4px solid transparent;border-right:3.4px solid transparent;border-top:4.4px solid #c0c0c0"></div>
<div class="abs" style="left:1387px;top:995.5px;width:1px;height:14px;background:#5a5a5a"></div>
<svg style="left:1529px;top:996px" width="17" height="16" viewBox="0 0 17 16" fill="none" stroke="#b0b0b0" stroke-width="1.2" stroke-linecap="round" stroke-linejoin="round"><rect x="3.6" y="3.8" width="11.4" height="11.2" rx="1.2"/><path d="M1 11.6 V2.2 C1 1.4 1.4 1 2.2 1 H11.6"/></svg>
<svg style="left:1806px;top:993px" width="26" height="24" viewBox="0 0 26 24" fill="none" stroke="#a0a0a0" stroke-width="1.3" stroke-linecap="round" stroke-linejoin="round"><g transform="translate(12.3 12.5) scale(.95)"><circle cx="0" cy="0" r="7.3"/><path d="M-3.7 -7.000 C-3.300 -11.400 3.300 -11.400 3.700 -7.000"/><path d="M0 -7.000 V7.200"/><path d="M-7.100 -3.700 L-9.800 -4.200 L-10.500 -6.500 M-7.400 .100 H-10.400 M-7.100 3.500 L-9.600 4.100 L-10.400 6.000"/><path d="M7.100 -3.700 L9.800 -4.200 L10.500 -6.300 M7.400 .100 H10.400 M7.100 3.500 L9.600 4.100 L10.400 6.000"/></g></svg>
<svg style="left:1848px;top:997.4px" width="22" height="14" viewBox="0 0 22 14" fill="none" stroke="#a0a0a0" stroke-width="1.2" stroke-linecap="round" stroke-linejoin="round"><path d="M1 6.8 C4 2.2 7.6 1.2 10.8 1.2 C14 1.2 17.6 2.2 20.6 6.8 C17.6 11.4 14 12.4 10.8 12.4 C7.6 12.4 4 11.4 1 6.8 Z"/><circle cx="10.8" cy="6.8" r="3.1"/></svg>
<div class="abs" style="left:1891.4px;top:1002.8px;width:2.6px;height:2.6px;border-radius:50%;background:#a8a8a8;box-shadow:6.6px 0 0 #a8a8a8,13.2px 0 0 #a8a8a8"></div>
<div class="abs" style="left:1431px;top:115px;width:352px;height:760px;border-radius:26px;background:#e6f7ff;overflow:hidden;box-shadow:0 4px 12px 0 rgba(255,255,255,.14)"><div class="abs" style="left:0;top:0;width:352px;height:82px;background:#ffffff"></div><div class="abs" style="left:81px;top:-20px;width:189px;height:49px;border-radius:17px;background:#000"></div></div>
<svg style="left:1739px;top:133.6px" width="11" height="8" viewBox="0 0 11 8"><path d="M.5 2.7 C3.2 .2 7.6 .2 10.3 2.7" fill="none" stroke="#111" stroke-width="1.3" stroke-linecap="round"/><path d="M2.5 4.7 C4.2 3.2 6.6 3.2 8.3 4.7" fill="none" stroke="#111" stroke-width="1.3" stroke-linecap="round"/><circle cx="5.4" cy="6.6" r="1.1" fill="#111"/></svg>
<div class="abs" style="left:1752.2px;top:133.2px;width:21.4px;height:9.2px;border:1px solid #8e8e8e;border-radius:2.4px"></div>
<div class="abs" style="left:1754.2px;top:135.2px;width:17.4px;height:5.2px;border-radius:1px;background:#0a0a0a"></div>
<div class="abs" style="left:1774px;top:136.2px;width:2px;height:3.4px;border-radius:0 2px 2px 0;background:#0a0a0a"></div>
<div class="abs" style="left:1697.4px;top:161.1px;width:78.6px;height:28.6px;border:1px solid #e3e3e3;border-radius:14.4px;background:#fff"></div>
<div class="abs" style="left:1708px;top:173.3px;width:3.8px;height:3.8px;border-radius:50%;background:#0a0a0a"></div>
<div class="abs" style="left:1714.5px;top:172px;width:6.4px;height:6.4px;border-radius:50%;background:#0a0a0a"></div>
<div class="abs" style="left:1723.1px;top:173.3px;width:3.8px;height:3.8px;border-radius:50%;background:#0a0a0a"></div>
<div class="abs" style="left:1748.9px;top:167.6px;width:15px;height:15px;border-radius:50%;border:2.3px solid #0a0a0a"></div>
<div class="abs" style="left:1753.2px;top:171.9px;width:6.4px;height:6.4px;border-radius:50%;background:#0a0a0a"></div>
<div class="abs" style="left:1524px;top:510px;width:166px;height:37px;border-radius:18.5px;background:#52c41a"></div>
<div class="abs" style="left:1524px;top:565px;width:166px;height:37px;border-radius:18.5px;background:#1890ff"></div>
<div class="abs" style="left:1524px;top:620px;width:166px;height:37px;border-radius:18.5px;background:#faad14"></div>
<div class="abs" style="left:1555px;top:862.4px;width:104.4px;height:4.8px;border-radius:2.4px;background:#0c0c0c"></div>
<div class="abs" style="left:1463px;top:913px;width:287px;height:32px;border-radius:5px;background:#39393b"></div>
<div class="abs" style="left:1579.6px;top:926px;border-left:2.6px solid transparent;border-right:2.6px solid transparent;border-top:4.4px solid #b8b8b8"></div>
<div class="abs" style="left:1592px;top:919.4px;width:1px;height:19.6px;background:#585858"></div>
<svg style="left:1609px;top:920px" width="19" height="19" viewBox="0 0 19 19" fill="none" stroke="#9a9a9a" stroke-width="1.3" stroke-linecap="round" stroke-linejoin="round"><path d="M3.2 11.6 C2 8 3.6 4 7.4 2.6 C9.4 1.9 11.4 2.2 13 3.2"/><path d="M11.6 .9 L13.4 3.4 L10.6 4.8"/><path d="M15.8 7.4 C17 11 15.4 15 11.6 16.4 C9.6 17.1 7.6 16.8 6 15.8"/><path d="M7.4 18.1 L5.6 15.6 L8.4 14.2"/></svg>
<svg style="left:1643.8px;top:920px" width="19" height="19" viewBox="0 0 19 19" fill="none" stroke="#9a9a9a" stroke-width="1.3" stroke-linecap="round" stroke-linejoin="round"><circle cx="9.4" cy="9.4" r="8.2"/><rect x="6" y="6" width="6.8" height="6.8" rx="1" fill="#9a9a9a" stroke="none"/></svg>
<svg style="left:1681.6px;top:919.6px" width="15" height="19" viewBox="0 0 15 19" fill="none" stroke="#9a9a9a" stroke-width="1.3" stroke-linecap="round" stroke-linejoin="round"><rect x="1.2" y="1" width="12.4" height="17" rx="1.8"/><path d="M5.6 15.4 H9.2"/></svg>
<svg style="left:1714.4px;top:920.4px" width="19" height="18" viewBox="0 0 19 18" fill="none" stroke="#9a9a9a" stroke-width="1.3" stroke-linecap="round" stroke-linejoin="round"><rect x="5.6" y="1" width="12.2" height="10.6" rx="1.2"/><path d="M3.4 5.4 H2.2 C1.4 5.4 1 5.8 1 6.6 V14.8 C1 15.6 1.4 16 2.2 16 H12 C12.8 16 13.2 15.6 13.2 14.8 V13.8"/><path d="M1 8 H5.4"/></svg>
<div class="abs" style="left:0;top:1020px;width:1918px;height:1px;background:#cfcfcf"></div>
<svg style="left:23px;top:1034.6px" width="33" height="24" viewBox="0 0 33 24"><defs><linearGradient id="cl" x1="0" y1="0" x2="0" y2="1"><stop offset="0" stop-color="#cfe2fc"/><stop offset=".6" stop-color="#c3d9fa"/><stop offset="1" stop-color="#8fb2f0"/></linearGradient></defs>
<path d="M7.4 21.4 C3.4 21.4 1 19.2 1 16.2 C1 13.4 3.2 11.4 6 11.2 C6.8 7 10.2 4 14.6 4 C18.6 4 21.8 6.4 23 9.8 C27.4 9.8 30.6 12.4 30.6 15.8 C30.6 19 28 21.4 24.4 21.4 Z" fill="url(#cl)" stroke="#8fb0ee" stroke-opacity=".55" stroke-width=".7"/></svg>
<div class="abs" style="left:38px;top:1028px;width:20px;height:20px;border-radius:50%;background:#c42b1c"></div>
<svg style="left:694px;top:1036px" width="29" height="29" viewBox="0 0 29 29"><defs><linearGradient id="wl" x1="0" y1="0" x2="1" y2="1"><stop offset="0" stop-color="#52c8ff"/><stop offset=".5" stop-color="#1893e8"/><stop offset="1" stop-color="#0768cc"/></linearGradient></defs>
<path d="M1 0 H13.8 V13.8 H0 V1 C0 .4 .4 0 1 0 Z M15.2 0 H28 C28.6 0 29 .4 29 1 V13.8 H15.2 Z M0 15.2 H13.8 V29 H1 C.4 29 0 28.6 0 28 Z M15.2 15.2 H29 V28 C29 28.6 28.6 29 28 29 H15.2 Z" fill="url(#wl)"/></svg>
<div class="abs" style="left:740.4px;top:1030.4px;width:273.6px;height:39.4px;border-radius:19.4px;background:#f4f4f4;border:1px solid #cdcdcd;box-shadow:0 1px 1px rgba(0,0,0,.06)"></div>
<svg style="left:754px;top:1040.4px" width="20" height="20" viewBox="0 0 20 20" fill="none" stroke="#222" stroke-width="1.9" stroke-linecap="round" stroke-linejoin="round"><circle cx="8.2" cy="8.1" r="6"/><path d="M12.6 12.6 L17.6 17.6"/></svg>
<svg style="left:940px;top:1026px" width="70" height="46" viewBox="0 0 70 46"><defs><linearGradient id="lf" x1="0" y1="1" x2="1" y2="0"><stop offset="0" stop-color="#a9dc3c"/><stop offset=".55" stop-color="#4fa51a"/><stop offset="1" stop-color="#237a0c"/></linearGradient><linearGradient id="lg" x1="0" y1="0" x2="1" y2="0"><stop offset="0" stop-color="#8fce2e"/><stop offset=".5" stop-color="#2f8a10"/><stop offset="1" stop-color="#9fd83a"/></linearGradient></defs>
<path d="M37.300 8.100 L35.500 8.300 L34.300 11.300 L29 11.600 L27.600 13.200 L24.500 13.800 L23.400 16 L20.700 17 L19.800 19.300 L17.300 20.600 L16.600 23 L14.400 24.600 L14 26.600 L12.100 29.400 L14.800 28.600 L16 29 L18.300 27.600 L20 27.800 L22 25.700 L24 25.600 L25.400 23.300 L27.400 22.700 L28.700 20 L30.600 18.800 L31.600 16.200 L33.600 14.600 L35.200 11.600 Z" fill="url(#lf)"/>
<path d="M34.300 13.800 L31.600 17.400 L29.300 19 L28.700 21.400 L26.300 23 L26.400 25.200 L25 26.400 L26.400 27.600 L26 29.800 L27.800 31.200 L28 33.400 L29.200 34.800 L31.400 33.600 L32.600 31 L34 30.400 L34.600 27.800 L36 26.400 L36.200 23.600 L37 22 L36.400 19 L35.600 16.600 Z" fill="url(#lg)"/>
<path d="M57.600 8.100 L56.400 8.700 L55.200 12 L52 13 L50.400 15.400 L46.800 16.400 L47.200 18 L43.600 19.800 L43.800 21.400 L41 23.600 L41.600 25.200 L39 27.400 L39.800 28.800 L38.400 31.600 L39.600 32.600 L38.600 35.600 L41 37.400 L44 35.800 L45 33.800 L47.400 33.400 L48.400 34.800 L50.600 31.600 L52.600 30.600 L53.400 27.800 L55.400 26.400 L56.400 23.400 L57.400 21.600 L57.800 17.600 L57.600 13 Z" fill="url(#lf)"/>
<path d="M56.800 9 L41.600 36 M35.400 10.500 L13.600 28.600 M34.600 14.400 L29.400 33.600" stroke="#1f700a" stroke-width=".9" fill="none" opacity=".7"/>
<ellipse cx="17.300" cy="31.100" rx="1.900" ry="2.300" fill="#c3e3f2"/><ellipse cx="39.400" cy="36.900" rx="2.100" ry="3" fill="#c3e3f2"/><ellipse cx="55" cy="29.400" rx="1.800" ry="2.900" fill="#c3e3f2"/><ellipse cx="30.700" cy="10.700" rx="1.500" ry="1.300" fill="#cfeaf5"/><ellipse cx="30.500" cy="17.500" rx="1.500" ry="1.300" fill="#cfeaf5"/><ellipse cx="50.300" cy="13.600" rx="2" ry="1.700" fill="#cfeaf5"/></svg>
<div class="abs" style="left:1030px;top:1043.8px;width:22.6px;height:20px;border-radius:2.4px;background:linear-gradient(#3a3a3a,#141414)"></div>
<div class="abs" style="left:1037.8px;top:1036.2px;width:22px;height:18.8px;border-radius:2px;background:linear-gradient(135deg,rgba(255,255,255,.95),rgba(236,236,236,.78))"></div>
<svg style="left:1085px;top:1036.6px" width="30" height="27" viewBox="0 0 30 27"><defs><linearGradient id="fd" x1="0" y1="0" x2="0" y2="1"><stop offset="0" stop-color="#ffd864"/><stop offset="1" stop-color="#f9b912"/></linearGradient></defs>
<path d="M1.6 0 H9.8 C10.6 0 11.2 .3 11.7 .9 L13.4 3 H28.4 C29.3 3 29.8 3.5 29.8 4.4 V8 H0 V1.6 C0 .6 .6 0 1.6 0 Z" fill="#e6a40a"/>
<path d="M0 5.400 H12.000 L14.2 3.6 H28.4 C29.3 3.6 29.8 4.1 29.8 5 V25 C29.8 25.900 29.3 26.4 28.4 26.4 H1.400 C.5 26.4 0 25.900 0 25 Z" fill="url(#fd)"/>
<path d="M5 26.4 V21.400 C5 20 5.800 19.2 7.2 19.2 H22.6 C24 19.2 24.8 20 24.8 21.400 V26.4 Z" fill="#1a86e0"/><path d="M8.4 22.6 H21.400" stroke="#0d5fb0" stroke-width="1.3" fill="none"/></svg>
<svg style="left:1139px;top:1034.6px" width="31" height="31" viewBox="0 0 31 31"><defs><linearGradient id="eg1" x1="0" y1="0" x2="1" y2="0"><stop offset="0" stop-color="#2ba5e8"/><stop offset=".55" stop-color="#35c1c8"/><stop offset="1" stop-color="#6ddc50"/></linearGradient><linearGradient id="eg2" x1="0" y1="0" x2="0" y2="1"><stop offset="0" stop-color="#1b8fe0"/><stop offset="1" stop-color="#0c59a8"/></linearGradient></defs>
<path d="M.6 14 C1.200 6 7.6 .4 15.6 .4 C24 .4 30.6 6.4 30.6 13.6 C30.6 18.6 27 21.600 23 21.600 C19.6 21.600 17.8 20 17.8 18.4 C17.8 17.2 18.8 16.8 18.8 15 C18.8 12.8 16.6 10.8 13.6 10.8 C8 10.8 4 15.4 4 20 Z" fill="url(#eg1)"/>
<path d="M.6 14 C.2 23.400 7 30.6 15.6 30.6 C20.2 30.6 24.6 28.4 27.400 24.8 C27.8 24.2 27.2 23.600 26.6 24 C24.8 25 22.8 25.400 20.8 25.400 C14.400 25.400 10 20.8 10 16 C10 13.8 11 12 12.600 10.9 C6.400 11.2 2.2 14 .6 14 Z" fill="url(#eg2)"/>
<path d="M9.8 28.9 C6 25.400 5.600 19 8.800 14.600 C9.8 13 11.400 11.600 13.200 10.9 C11 12 10 14 10 16 C10 21.200 14.600 25.400 20.8 25.400 C16.800 28.200 12.800 30 9.800 28.900 Z" fill="#0b4f9c" opacity=".55"/></svg>
<div class="abs" style="left:1151px;top:1070.2px;width:8px;height:3.4px;border-radius:1.7px;background:#8c8c8c"></div>
<div class="abs" style="left:1185.6px;top:1025.6px;width:48.4px;height:48.8px;border-radius:5px;background:#f1f1f1;border:1px solid #e9e9e9;box-shadow:0 0 1px rgba(0,0,0,.12)"></div>
<svg style="left:1195px;top:1036px" width="30" height="28" viewBox="0 0 30 28"><path d="M14.6 1 C22 1 28 6 28 12.600 C28 19.200 22 24.200 14.600 24.200 C12.800 24.200 11.200 24 9.600 23.400 L4.600 26.200 L5.800 21.600 C2.800 19.400 1.200 16.200 1.200 12.600 C1.200 6 7.200 1 14.600 1 Z" fill="#f7f7f7" stroke="#e6e6e6" stroke-width=".6"/>
<path d="M11.6 8.600 L16 10.800 L11.600 13" fill="none" stroke="#07c160" stroke-width="1.3"/><path d="M16.6 16.200 H21.200" stroke="#07c160" stroke-width="1.400" fill="none"/><rect x="21.600" y="9" width="2.900" height="2.900" fill="#07c160"/></svg>
<div class="abs" style="left:1199.8px;top:1070px;width:20px;height:4px;border-radius:2px;background:#0b6fd8"></div>
<svg style="left:1567.6px;top:1045.6px" width="16" height="10" viewBox="0 0 16 10" fill="none" stroke="#1a1a1a" stroke-width="1.7" stroke-linecap="round" stroke-linejoin="round"><path d="M1.400 8 L7.600 1.600 L13.800 8"/></svg>
<svg style="left:1604px;top:1038.4px" width="22" height="23" viewBox="0 0 22 23" fill="none" stroke="#1a1a1a" stroke-width="1.5" stroke-linecap="round" stroke-linejoin="round"><path d="M2 11.600 C1.600 6 5.600 2.400 10.400 2.400 C13.800 2.400 16.400 3.800 18.200 6.400"/><path d="M18.800 1.800 V6.600 H14"/><path d="M10.800 20.800 C8 20.800 5.600 19.600 3.800 17"/><path d="M3.200 21.800 V17 H8"/></svg>
<div class="abs" style="left:1615px;top:1050.4px;width:10.200px;height:10.200px;border-radius:50%;background:#f79009"></div>
<svg style="left:1644.8px;top:1040.4px" width="22" height="19" viewBox="0 0 22 19" fill="none" stroke="#1a1a1a" stroke-width="1.5" stroke-linecap="round" stroke-linejoin="round"><path d="M6 15.400 C3.200 15.400 1.400 13.600 1.400 11.200 C1.400 9 3 7.400 5 7.200 C5.600 4.400 8 2.400 10.800 2.400 C13.400 2.400 15.600 4 16.400 6.400 C19 6.600 20.400 8.400 20.400 10.800 C20.400 13.400 18.600 15.400 16 15.400 Z" fill="#c9c9c9"/><path d="M3.400 1.600 L19 17.600"/></svg>
<svg style="left:1724.6px;top:1041.5px" width="22" height="17" viewBox="0 0 22 17" fill="none" stroke="#1a1a1a" stroke-width="1.65" stroke-linecap="round" stroke-linejoin="round"><path d="M1.200 5.600 C6.400 .400 15 .400 20.200 5.600"/><path d="M4.400 8.800 C8 5.200 13.400 5.200 17 8.800"/><path d="M7.600 12 C9.400 10.200 12 10.200 13.800 12"/><circle cx="10.700" cy="14.800" r="1.100" fill="#1a1a1a" stroke="none"/></svg>
<svg style="left:1754.4px;top:1040.4px" width="22" height="18" viewBox="0 0 22 18" fill="none" stroke="#1a1a1a" stroke-width="1.45" stroke-linecap="round" stroke-linejoin="round"><path d="M1.400 6.400 H4.400 L8.800 2 V15.600 L4.400 11.200 H1.400 Z"/><path d="M11.600 6 C12.800 7.600 12.800 10 11.600 11.600"/><path d="M14.400 3.800 C16.800 6.600 16.800 11 14.400 13.800"/><path d="M17.200 1.600 C20.600 5.600 20.600 12 17.200 16"/></svg>
<svg style="left:1784.4px;top:1039.2px" width="22" height="18" viewBox="0 0 22 18" fill="none" stroke="#1a1a1a" stroke-width="1.3" stroke-linecap="round" stroke-linejoin="round"><rect x="1.600" y="5" width="16.400" height="10.800" rx="2.200"/><rect x="3.800" y="7.200" width="12" height="6.400" rx=".8" fill="#1a1a1a" stroke="none"/><path d="M18.600 8.400 H19.400 C20 8.400 20.400 8.800 20.400 9.400 V11.400 C20.400 12 20 12.400 19.400 12.400 H18.600" fill="#1a1a1a"/><path d="M5.200 1 L2 6.400 H5 L3.600 10.600 L8 4.600 H5 Z" fill="#1a1a1a" stroke="#e2e2e2" stroke-width=".7"/></svg>
<div class="t" style="left:16.20px;top:11.50px;font-size:16.4px;color:#ffffff;font-weight:500;letter-spacing:0.600px;">项目</div>
<div class="t" style="left:60.20px;top:12.00px;font-size:16.4px;color:#ffffff;font-weight:500;letter-spacing:1.000px;">文件</div>
<div class="t" style="left:106.00px;top:12.00px;font-size:16.4px;color:#ffffff;font-weight:500;letter-spacing:0.400px;">编辑</div>
<div class="t" style="left:151.00px;top:11.50px;font-size:16.4px;color:#ffffff;font-weight:500;letter-spacing:0.400px;">工具</div>
<div class="t" style="left:196.20px;top:12.00px;font-size:16.4px;color:#ffffff;font-weight:500;letter-spacing:-0.400px;">转到</div>
<div class="t" style="left:240.20px;top:12.00px;font-size:16.4px;color:#ffffff;font-weight:500;letter-spacing:1.000px;">选择</div>
<div class="t" style="left:285.20px;top:11.50px;font-size:16.4px;color:#ffffff;font-weight:500;letter-spacing:0.600px;">视图</div>
<div class="t" style="left:330.20px;top:12.00px;font-size:16.4px;color:#ffffff;font-weight:500;letter-spacing:-0.400px;">界面</div>
<div class="t" style="left:376.00px;top:12.00px;font-size:16.4px;color:#ffffff;font-weight:500;letter-spacing:0.400px;">设置</div>
<div class="t" style="left:418.00px;top:11.40px;font-size:15px;color:#ffffff;transform:scaleX(0.9091);transform-origin:0 50%;">...</div>
<div class="t" style="left:559.20px;top:12.00px;font-size:15px;color:#b4b4b4;transform:scaleX(1.0862);transform-origin:0 50%;">zhongyao</div>
<div class="t" style="left:636.00px;top:12.50px;font-size:15px;color:#7d7d7d;">-</div>
<div class="t" style="left:648.00px;top:12.50px;font-size:15px;color:#7d7d7d;letter-spacing:-0.254px;">微信开发者工具 Stable 2.01.2510290</div>
<div class="t" style="left:473.00px;top:47.80px;font-size:15px;color:#cccccc;transform:scaleX(0.9928);transform-origin:0 50%;">index.wxss - miniprogram-2 - WeChat Web Devtools</div>
<div class="t" style="left:1118.00px;top:10.50px;font-size:15px;color:#e6e6e6;">小程序模式</div>
<div class="t" style="left:1249.00px;top:10.50px;font-size:15px;color:#e6e6e6;">预览</div>
<div class="t" style="left:1326.20px;top:10.50px;font-size:15px;color:#e6e6e6;">真机调试</div>
<div class="t" style="left:1431.00px;top:10.00px;font-size:15px;color:#5c5c5c;letter-spacing:1.400px;">上传</div>
<div class="t" style="left:1768.00px;top:50.80px;font-size:13.75px;color:#9a9a9a;letter-spacing:-0.267px;">普通编译</div>
<div class="t" style="left:25.20px;top:137.70px;font-size:14.4px;color:#d8d8d8;letter-spacing:-0.875px;">资源管理器</div>
<div class="t" style="left:26.20px;top:173.60px;font-size:13.75px;color:#cccccc;font-weight:bold;transform:scaleX(1.0053);transform-origin:0 50%;">MINIPROGRAM-2</div>
<div class="t" style="left:71.20px;top:200.00px;font-size:16.25px;color:#e4e4e4;transform:scaleX(0.9457);transform-origin:0 50%;">pages</div>
<div class="t" style="left:81.00px;top:227.50px;font-size:16.25px;color:#e4e4e4;transform:scaleX(0.9515);transform-origin:0 50%;">index</div>
<div class="t" style="left:90.00px;top:255.00px;font-size:16.25px;color:#e4e4e4;transform:scaleX(0.9438);transform-origin:0 50%;">index.js</div>
<div class="t" style="left:90.00px;top:282.50px;font-size:16.25px;color:#e4e4e4;transform:scaleX(0.9780);transform-origin:0 50%;">index.json</div>
<div class="t" style="left:90.00px;top:310.00px;font-size:16.25px;color:#e4e4e4;transform:scaleX(0.9888);transform-origin:0 50%;">index.wxml</div>
<div class="t" style="left:90.00px;top:337.50px;font-size:16.25px;color:#e4e4e4;transform:scaleX(0.9431);transform-origin:0 50%;">index.wxss</div>
<div class="t" style="left:81.20px;top:365.00px;font-size:16.25px;color:#e4e4e4;transform:scaleX(0.9868);transform-origin:0 50%;">logs</div>
<div class="t" style="left:71.20px;top:392.50px;font-size:16.25px;color:#e4e4e4;transform:scaleX(1.0039);transform-origin:0 50%;">utils</div>
<div class="t" style="left:71.20px;top:420.00px;font-size:16.25px;color:#e4e4e4;transform:scaleX(0.9420);transform-origin:0 50%;">app.js</div>
<div class="t" style="left:71.20px;top:447.50px;font-size:16.25px;color:#e4e4e4;transform:scaleX(0.9771);transform-origin:0 50%;">app.json</div>
<div class="t" style="left:71.20px;top:475.00px;font-size:16.25px;color:#e4e4e4;transform:scaleX(0.9265);transform-origin:0 50%;">app.wxss</div>
<div class="t" style="left:70.20px;top:502.50px;font-size:16.25px;color:#e4e4e4;transform:scaleX(1.0039);transform-origin:0 50%;">project.config.json</div>
<div class="t" style="left:71.20px;top:530.00px;font-size:16.25px;color:#e4e4e4;transform:scaleX(0.9816);transform-origin:0 50%;">project.private.config.js...</div>
<div class="t" style="left:71.20px;top:557.50px;font-size:16.25px;color:#e4e4e4;transform:scaleX(0.9693);transform-origin:0 50%;">sitemap.json</div>
<div class="t" style="left:25.20px;top:935.10px;font-size:13.75px;color:#cccccc;font-weight:bold;letter-spacing:-0.100px;">大纲</div>
<div class="t" style="left:25.20px;top:963.00px;font-size:13.75px;color:#cccccc;font-weight:bold;letter-spacing:-0.050px;">时间线</div>
<div class="t" style="left:289.00px;top:89.60px;font-size:16.25px;color:#b2b2b2;transform:scaleX(0.9918);transform-origin:0 50%;">index.json</div>
<div class="t" style="left:439.20px;top:89.60px;font-size:16.25px;color:#b2b2b2;transform:scaleX(0.9937);transform-origin:0 50%;">index.wxml</div>
<div class="t" style="left:595.00px;top:89.60px;font-size:16.25px;color:#b2b2b2;transform:scaleX(0.9704);transform-origin:0 50%;">index.js</div>
<div class="t" style="left:746.00px;top:89.60px;font-size:16.25px;color:#ffffff;transform:scaleX(0.9367);transform-origin:0 50%;">index.wxss</div>
<div class="t" style="left:269.00px;top:118.31px;font-size:16.25px;color:#9c9c9c;transform:scaleX(0.9890);transform-origin:0 50%;">pages</div>
<div class="t" style="left:332.00px;top:118.31px;font-size:16.25px;color:#9c9c9c;transform:scaleX(0.9843);transform-origin:0 50%;">index</div>
<div class="t" style="left:419.00px;top:118.31px;font-size:16.25px;color:#cccccc;transform:scaleX(0.9388);transform-origin:0 50%;">index.wxss</div>
<div class="t" style="left:537.20px;top:118.31px;font-size:16.25px;color:#9c9c9c;transform:scaleX(1.0314);transform-origin:0 50%;">.reset-btn</div>
<div class="t" style="left:261.00px;top:153.81px;font-size:18.27px;color:#5c5c5c;font-family:'DejaVu Sans Mono','Noto Serif CJK SC',monospace;width:22.5px;text-align:right;">57</div>
<div class="t" style="left:315.60px;top:153.81px;font-size:18.27px;color:#d4d4d4;font-family:'DejaVu Sans Mono','Noto Serif CJK SC',monospace;white-space:pre;-webkit-text-stroke-width:.35px;">  <span style="color:#fd9d45">background-color</span><span style="color:#74c8f4">:</span> <span style="display:inline-block;width:16px;height:16px;margin:0 5.2px 0 3px;border:1px solid #f4f4f4;background:#1890ff"></span><span style="color:#5cc2ff">#</span><span style="color:#d08c72">1890ff</span><span style="color:#74c8f4">;</span></div>
<div class="t" style="left:261.00px;top:193.81px;font-size:18.27px;color:#5c5c5c;font-family:'DejaVu Sans Mono','Noto Serif CJK SC',monospace;width:22.5px;text-align:right;">58</div>
<div class="t" style="left:315.60px;top:193.81px;font-size:18.27px;color:#d4d4d4;font-family:'DejaVu Sans Mono','Noto Serif CJK SC',monospace;white-space:pre;-webkit-text-stroke-width:.35px;">  <span style="color:#fd9d45">color</span><span style="color:#74c8f4">:</span> <span style="display:inline-block;width:16px;height:16px;margin:0 5.2px 0 3px;border:1px solid #f4f4f4;background:#ffffff"></span><span style="color:#5cc2ff">#</span><span style="color:#d08c72">ffffff</span><span style="color:#74c8f4">;</span></div>
<div class="t" style="left:261.00px;top:233.81px;font-size:18.27px;color:#5c5c5c;font-family:'DejaVu Sans Mono','Noto Serif CJK SC',monospace;width:22.5px;text-align:right;">59</div>
<div class="t" style="left:315.60px;top:233.81px;font-size:18.27px;color:#d4d4d4;font-family:'DejaVu Sans Mono','Noto Serif CJK SC',monospace;white-space:pre;-webkit-text-stroke-width:.35px;"><span style="color:#ffd700">}</span></div>
<div class="t" style="left:261.00px;top:273.81px;font-size:18.27px;color:#5c5c5c;font-family:'DejaVu Sans Mono','Noto Serif CJK SC',monospace;width:22.5px;text-align:right;">60</div>
<div class="t" style="left:261.00px;top:313.81px;font-size:18.27px;color:#5c5c5c;font-family:'DejaVu Sans Mono','Noto Serif CJK SC',monospace;width:22.5px;text-align:right;">61</div>
<div class="t" style="left:315.60px;top:313.81px;font-size:18.27px;color:#d4d4d4;font-family:'DejaVu Sans Mono','Noto Serif CJK SC',monospace;white-space:pre;-webkit-text-stroke-width:.35px;"><span style="color:#5cb85c">/* <span style="font-size:19.5px;letter-spacing:.5px;-webkit-text-stroke-width:.1px">重置按钮</span> <span style="font-size:19.5px;letter-spacing:.5px;-webkit-text-stroke-width:.1px">橙色</span> */</span></div>
<div class="t" style="left:261.00px;top:353.81px;font-size:18.27px;color:#5c5c5c;font-family:'DejaVu Sans Mono','Noto Serif CJK SC',monospace;width:22.5px;text-align:right;">62</div>
<div class="t" style="left:315.60px;top:353.81px;font-size:18.27px;color:#d4d4d4;font-family:'DejaVu Sans Mono','Noto Serif CJK SC',monospace;white-space:pre;-webkit-text-stroke-width:.35px;"><span style="color:#7fcbf5">.reset-btn</span> <span style="color:#ffd700">{</span></div>
<div class="t" style="left:261.00px;top:393.81px;font-size:18.27px;color:#e6e6e6;font-family:'DejaVu Sans Mono','Noto Serif CJK SC',monospace;width:22.5px;text-align:right;">63</div>
<div class="t" style="left:315.60px;top:393.81px;font-size:18.27px;color:#d4d4d4;font-family:'DejaVu Sans Mono','Noto Serif CJK SC',monospace;white-space:pre;-webkit-text-stroke-width:.35px;">  <span style="color:#fd9d45">background-color</span><span style="color:#74c8f4">:</span> <span style="display:inline-block;width:16px;height:16px;margin:0 5.2px 0 3px;border:1px solid #f4f4f4;background:#faad14"></span><span style="color:#5cc2ff">#</span><span style="color:#d08c72">faad14</span><span style="color:#74c8f4">;</span></div>
<div class="t" style="left:261.00px;top:433.81px;font-size:18.27px;color:#5c5c5c;font-family:'DejaVu Sans Mono','Noto Serif CJK SC',monospace;width:22.5px;text-align:right;">64</div>
<div class="t" style="left:315.60px;top:433.81px;font-size:18.27px;color:#d4d4d4;font-family:'DejaVu Sans Mono','Noto Serif CJK SC',monospace;white-space:pre;-webkit-text-stroke-width:.35px;">  <span style="color:#fd9d45">color</span><span style="color:#74c8f4">:</span> <span style="display:inline-block;width:16px;height:16px;margin:0 5.2px 0 3px;border:1px solid #f4f4f4;background:#ffffff"></span><span style="color:#5cc2ff">#</span><span style="color:#d08c72">ffffff</span><span style="color:#74c8f4">;</span></div>
<div class="t" style="left:261.00px;top:473.81px;font-size:18.27px;color:#5c5c5c;font-family:'DejaVu Sans Mono','Noto Serif CJK SC',monospace;width:22.5px;text-align:right;">65</div>
<div class="t" style="left:315.60px;top:473.81px;font-size:18.27px;color:#d4d4d4;font-family:'DejaVu Sans Mono','Noto Serif CJK SC',monospace;white-space:pre;-webkit-text-stroke-width:.35px;"><span style="color:#ffd700">}</span></div>
<div class="t" style="left:261.00px;top:513.81px;font-size:18.27px;color:#5c5c5c;font-family:'DejaVu Sans Mono','Noto Serif CJK SC',monospace;width:22.5px;text-align:right;">66</div>
<div class="t" style="left:261.00px;top:553.81px;font-size:18.27px;color:#5c5c5c;font-family:'DejaVu Sans Mono','Noto Serif CJK SC',monospace;width:22.5px;text-align:right;">67</div>
<div class="t" style="left:315.60px;top:553.81px;font-size:18.27px;color:#d4d4d4;font-family:'DejaVu Sans Mono','Noto Serif CJK SC',monospace;white-space:pre;-webkit-text-stroke-width:.35px;"><span style="color:#5cb85c">/* <span style="font-size:19.5px;letter-spacing:.5px;-webkit-text-stroke-width:.1px">按钮按压动效</span> */</span></div>
<div class="t" style="left:261.00px;top:593.81px;font-size:18.27px;color:#5c5c5c;font-family:'DejaVu Sans Mono','Noto Serif CJK SC',monospace;width:22.5px;text-align:right;">68</div>
<div class="t" style="left:315.60px;top:593.81px;font-size:18.27px;color:#d4d4d4;font-family:'DejaVu Sans Mono','Noto Serif CJK SC',monospace;white-space:pre;-webkit-text-stroke-width:.35px;"><span style="color:#7fcbf5">.btn</span><span style="color:#74c8f4">:</span><span style="color:#d2d2d2">active</span> <span style="color:#ffd700">{</span></div>
<div class="t" style="left:261.00px;top:633.81px;font-size:18.27px;color:#5c5c5c;font-family:'DejaVu Sans Mono','Noto Serif CJK SC',monospace;width:22.5px;text-align:right;">69</div>
<div class="t" style="left:315.60px;top:633.81px;font-size:18.27px;color:#d4d4d4;font-family:'DejaVu Sans Mono','Noto Serif CJK SC',monospace;white-space:pre;-webkit-text-stroke-width:.35px;">  <span style="color:#fd9d45">transform</span><span style="color:#74c8f4">:</span> <span style="color:#dfdfa6">scale</span><span style="color:#d56fd6">(</span><span style="color:#f4716b">0.95</span><span style="color:#d56fd6">)</span><span style="color:#74c8f4">;</span></div>
<div class="t" style="left:261.00px;top:673.81px;font-size:18.27px;color:#5c5c5c;font-family:'DejaVu Sans Mono','Noto Serif CJK SC',monospace;width:22.5px;text-align:right;">70</div>
<div class="t" style="left:315.60px;top:673.81px;font-size:18.27px;color:#d4d4d4;font-family:'DejaVu Sans Mono','Noto Serif CJK SC',monospace;white-space:pre;-webkit-text-stroke-width:.35px;"><span style="color:#ffd700">}</span></div>
<div class="t" style="left:275.00px;top:764.50px;font-size:14.6px;color:#ededed;letter-spacing:-1.000px;">构建</div>
<div class="t" style="left:321.30px;top:763.70px;font-size:14.4px;color:#f4f4f4;letter-spacing:-.75px;">100</div>
<div class="t" style="left:377.00px;top:764.50px;font-size:14.6px;color:#a6a6a6;letter-spacing:-1.050px;">调试器</div>
<div class="t" style="left:437.20px;top:763.70px;font-size:14.4px;color:#ffffff;letter-spacing:-.8px;">1, 3</div>
<div class="t" style="left:491.00px;top:764.50px;font-size:14.6px;color:#a6a6a6;letter-spacing:0.500px;">问题</div>
<div class="t" style="left:549.00px;top:764.50px;font-size:14.6px;color:#a6a6a6;letter-spacing:-0.500px;">输出</div>
<div class="t" style="left:607.00px;top:764.50px;font-size:14.6px;color:#a6a6a6;letter-spacing:-0.725px;">调试控制台</div>
<div class="t" style="left:705.20px;top:764.50px;font-size:14.6px;color:#a6a6a6;letter-spacing:-0.200px;">终端</div>
<div class="t" style="left:763.60px;top:764.50px;font-size:14.6px;color:#a6a6a6;letter-spacing:-0.733px;">代码质量</div>
<div class="t" style="left:300.00px;top:820.81px;font-size:15px;color:#d2d2d2;font-family:'Liberation Mono','Noto Serif CJK SC',monospace;white-space:pre;">analyzing codes...</div>
<div class="t" style="left:300.00px;top:840.81px;font-size:15px;color:#d2d2d2;font-family:'Liberation Mono','Noto Serif CJK SC',monospace;white-space:pre;">ignoring files: project.private.config.json</div>
<div class="t" style="left:300.00px;top:860.81px;font-size:15px;color:#4e9a06;font-family:'Liberation Mono','Noto Serif CJK SC',monospace;white-space:pre;">analyzing codes success</div>
<div class="t" style="left:300.00px;top:879.81px;font-size:15px;color:#d2d2d2;font-family:'Liberation Mono','Noto Serif CJK SC',monospace;white-space:pre;"><span style="font-size:15.6px;letter-spacing:2.4px">对比文件列表完成，耗时：</span>1ms</div>
<div class="t" style="left:300.00px;top:899.81px;font-size:15px;color:#d2d2d2;font-family:'Liberation Mono','Noto Serif CJK SC',monospace;white-space:pre;"><span style="font-size:15.6px;letter-spacing:2.4px">正在打包</span></div>
<div class="t" style="left:300.00px;top:919.81px;font-size:15px;color:#d2d2d2;font-family:'Liberation Mono','Noto Serif CJK SC',monospace;white-space:pre;"><span style="font-size:15.6px;letter-spacing:2.4px">打包完成，耗时：</span>0ms</div>
<div class="t" style="left:300.00px;top:939.81px;font-size:15px;color:#d2d2d2;font-family:'Liberation Mono','Noto Serif CJK SC',monospace;white-space:pre;"><span style="font-size:15.6px;letter-spacing:2.4px">上传中</span></div>
<div class="t" style="left:300.00px;top:959.81px;font-size:15px;color:#d2d2d2;font-family:'Liberation Mono','Noto Serif CJK SC',monospace;white-space:pre;"><span style="font-size:15.6px;letter-spacing:2.4px">上传完成，耗时：</span>835ms</div>
<div class="t" style="left:41.00px;top:992.40px;font-size:15px;color:#9a9a9a;">0</div>
<div class="t" style="left:75.00px;top:992.40px;font-size:15px;color:#9a9a9a;">0</div>
<div class="t" style="left:960.80px;top:993.70px;font-size:15px;color:#9a9a9a;letter-spacing:-0.125px;">行 63，列 29</div>
<div class="t" style="left:1066.00px;top:993.70px;font-size:15px;color:#9a9a9a;">空格: 2</div>
<div class="t" style="left:1131.00px;top:992.81px;font-size:15px;color:#9a9a9a;transform:scaleX(0.9312);transform-origin:0 50%;">UTF-8</div>
<div class="t" style="left:1192.20px;top:992.81px;font-size:15px;color:#9a9a9a;transform:scaleX(0.7575);transform-origin:0 50%;">LF</div>
<div class="t" style="left:1249.20px;top:992.81px;font-size:15px;color:#9a9a9a;transform:scaleX(0.8070);transform-origin:0 50%;">CSS</div>
<div class="t" style="left:1303.20px;top:993.70px;font-size:15px;color:#c6c6c6;letter-spacing:0.333px;">页面路径</div>
<div class="t" style="left:1397.40px;top:992.81px;font-size:15px;color:#b8b8b8;transform:scaleX(1.0099);transform-origin:0 50%;">pages/index/index</div>
<div class="t" style="left:1440.80px;top:126.40px;font-size:10.8px;color:#2a2a2a;transform:scaleX(0.8967);transform-origin:0 50%;">14:12</div>
<div class="t" style="left:1582.80px;top:169.70px;font-size:11.8px;color:#161616;font-weight:300;letter-spacing:0.200px;">小李科技</div>
<div class="t" style="left:1489.20px;top:418.10px;font-size:42px;color:#1890ff;font-weight:bold;line-height:44px;word-spacing:4.6px;">00 : 00 : 00</div>
<div class="t" style="left:1593.60px;top:525.90px;font-size:13px;color:#ffffff;font-weight:bold;letter-spacing:0.400px;">开始</div>
<div class="t" style="left:1593.60px;top:580.90px;font-size:13px;color:#ffffff;font-weight:bold;letter-spacing:0.400px;">暂停</div>
<div class="t" style="left:1593.60px;top:635.90px;font-size:13px;color:#ffffff;font-weight:bold;letter-spacing:0.400px;">重置</div>
<div class="t" style="left:1471.40px;top:921.31px;font-size:13.75px;color:#c4c4c4;transform:scaleX(0.9900);transform-origin:0 50%;">iPhone 12/13 (...</div>
<div class="t" style="left:43.90px;top:1028.40px;font-size:14px;color:#ffffff;">5</div>
<div class="t" style="left:63.40px;top:1030.20px;font-size:14.8px;color:#1c1c1c;letter-spacing:0.067px;"><span style="display:inline-block;transform:scaleX(.86);transform-origin:0 50%">16°C</span></div>
<div class="t" style="left:63.40px;top:1048.80px;font-size:14.5px;color:#2a2a2a;">阴</div>
<div class="t" style="left:786.00px;top:1040.70px;font-size:17.5px;color:#5a5a5a;letter-spacing:0.300px;">搜索</div>
<div class="t" style="left:1684.20px;top:1040.80px;font-size:20.5px;color:#1a1a1a;">中</div>
<div class="t" style="left:1859.40px;top:1029.80px;font-size:15px;color:#1a1a1a;transform:scaleX(0.9298);transform-origin:0 50%;">14:12</div>
<div class="t" style="left:1826.40px;top:1050.70px;font-size:15px;color:#1a1a1a;transform:scaleX(1.0215);transform-origin:0 50%;">2026/4/20</div>
</body>
</html>
